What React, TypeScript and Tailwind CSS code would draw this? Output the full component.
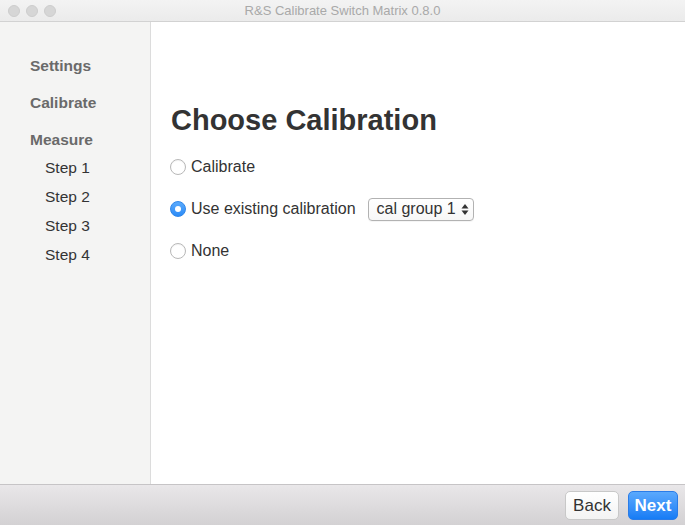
import React from 'react';

const FONT = "font-['Liberation_Sans','Helvetica_Neue',Arial,sans-serif]";

const Radio: React.FC<{ checked?: boolean }> = ({ checked }) =>
    checked ? (
        <span className="w-4 h-4 rounded-full bg-gradient-to-b from-[#5aaafc] to-[#2a8bf7] border border-[#2f86ea] flex items-center justify-center shrink-0">
            <span className="w-[6px] h-[6px] rounded-full bg-white" />
        </span>
    ) : (
        <span className="w-4 h-4 rounded-full bg-white border border-[#b8b8b8] shadow-[inset_0_1px_1px_rgba(0,0,0,0.05)] shrink-0" />
    );

const App: React.FC = () => {
    return (
        <div className={`w-[685px] h-[525px] flex flex-col bg-white overflow-hidden ${FONT}`}>
            {/* Title bar */}
            <div className="h-[22px] shrink-0 grid grid-cols-[1fr_auto_1fr] items-center bg-gradient-to-b from-[#f3f3f3] to-[#ebebeb] border-b border-[#d2d2d2]">
                <div className="flex items-center gap-[6px] pl-[8px]">
                    <span className="w-3 h-3 rounded-full bg-[#d6d6d6] border border-[#cdcdcd]" />
                    <span className="w-3 h-3 rounded-full bg-[#d6d6d6] border border-[#cdcdcd]" />
                    <span className="w-3 h-3 rounded-full bg-[#d6d6d6] border border-[#cdcdcd]" />
                </div>
                <div className="text-[13px] text-[#a9a9a9] leading-none">R&amp;S Calibrate Switch Matrix 0.8.0</div>
                <div />
            </div>

            {/* Body */}
            <div className="flex flex-1 min-h-0">
                <div className="w-[151px] shrink-0 bg-[#f4f4f3] border-r border-[#dcdcdc] flex flex-col pt-[35px] pl-[30px] text-[15.5px] leading-[18px]">
                    <div className="font-bold text-[#6a6a6a]">Settings</div>
                    <div className="font-bold text-[#6a6a6a] mt-[19px]">Calibrate</div>
                    <div className="font-bold text-[#6a6a6a] mt-[19px]">Measure</div>
                    <div className="pl-[15px] text-[#333] mt-[10px]">Step 1</div>
                    <div className="pl-[15px] text-[#333] mt-[11px]">Step 2</div>
                    <div className="pl-[15px] text-[#333] mt-[11px]">Step 3</div>
                    <div className="pl-[15px] text-[#333] mt-[11px]">Step 4</div>
                </div>

                <div className="flex-1 flex flex-col pt-[81px] pl-[19px]">
                    <h1 className="text-[29px] leading-[35px] font-bold text-[#333] pl-[1px]">Choose Calibration</h1>
                    <div className="flex flex-col gap-[20px] mt-[18px] text-[16px] text-[#333]">
                        <label className="h-[22px] flex items-center gap-[5px]">
                            <Radio />
                            <span>Calibrate</span>
                        </label>
                        <label className="h-[22px] flex items-center gap-[5px]">
                            <Radio checked />
                            <span>Use existing calibration</span>
                            <span className="ml-[7px] w-[106px] h-[23px] rounded-[4px] border border-[#b2b2b2] bg-gradient-to-b from-white to-[#f7f7f7] flex items-center justify-between pl-[8px] pr-[4px] shadow-[0_1px_0_rgba(0,0,0,0.04)]">
                                <span>cal group 1</span>
                                <svg width="8" height="13" viewBox="0 0 8 13" className="text-[#333]">
                                    <path d="M0.5 5.5 L4 1 L7.5 5.5 Z" fill="currentColor" />
                                    <path d="M0.5 7.5 L4 12 L7.5 7.5 Z" fill="currentColor" />
                                </svg>
                            </span>
                        </label>
                        <label className="h-[22px] flex items-center gap-[5px]">
                            <Radio />
                            <span>None</span>
                        </label>
                    </div>
                </div>
            </div>

            {/* Footer */}
            <div className="h-[41px] shrink-0 border-t border-[#c6c4c6] bg-gradient-to-b from-[#e9e7e9] to-[#d3d1d3] flex items-center justify-end gap-[9px] pr-[7px]">
                <button className="w-[54px] h-[29px] rounded-[5px] border border-[#c8c8c8] bg-gradient-to-b from-white to-[#f3f3f3] text-[17px] text-[#333] leading-none">
                    Back
                </button>
                <button className="w-[50px] h-[29px] rounded-[5px] border border-[#2a7ce8] bg-gradient-to-b from-[#5aa9fd] to-[#157cf5] text-[17px] font-bold text-white leading-none">
                    Next
                </button>
            </div>
        </div>
    );
};

export default App;
